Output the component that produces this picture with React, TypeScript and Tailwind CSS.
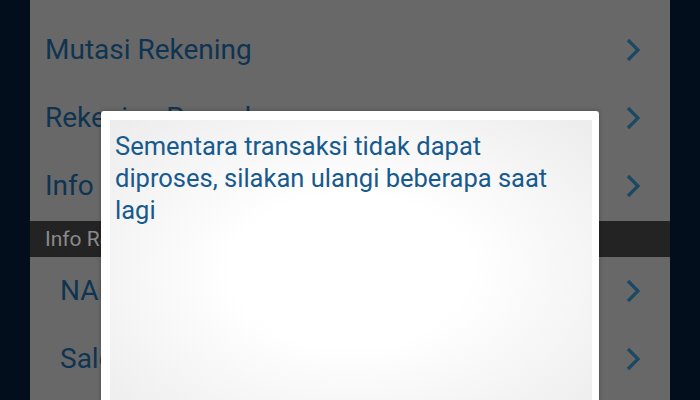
const ROWS_TOP = ['Mutasi Rekening', 'Rekening Ponsel', 'Info Kartu Kredit'];
const ROWS_BOTTOM = ['NAB Reksadana', 'Saldo Reksadana'];

function Chevron() {
  return (
    <svg width="18" height="26" viewBox="0 0 18 26" className="shrink-0">
      <path d="M4 3 L14 13 L4 23" fill="none" stroke="#1b4864" strokeWidth="3.2" strokeLinecap="butt" strokeLinejoin="miter" />
    </svg>
  );
}

function MenuRow({ label, indent }: { label: string; indent?: boolean }) {
  return (
    <div className={`flex h-[68px] items-center justify-between pr-[28px] ${indent ? 'pl-[30px]' : 'pl-[15px]'}`}>
      <span className="text-[28px] leading-none text-[#0f3452]">{label}</span>
      <Chevron />
    </div>
  );
}

export default function App() {
  return (
    <div
      className="relative flex h-[400px] w-[700px] overflow-hidden bg-[#020e1b]"
      style={{ fontFamily: 'Roboto, "Noto Sans", sans-serif' }}
    >
      <div className="w-[30px] shrink-0" />
      <div className="flex w-[640px] flex-col bg-[#686868] pt-[16px]">
        {ROWS_TOP.map((r) => (
          <MenuRow key={r} label={r} />
        ))}
        <div className="mt-[1px] flex h-[36px] items-center bg-[#232323] pl-[15px]">
          <span className="text-[21px] leading-none text-[#8a8a8a]">Info Reksadana</span>
        </div>
        {ROWS_BOTTOM.map((r) => (
          <MenuRow key={r} label={r} indent />
        ))}
      </div>

      <div className="absolute left-[101px] top-[111px] h-[320px] w-[498px] rounded-[3px] bg-white p-[9px] pr-[7px] shadow-[0_0_4px_rgba(0,0,0,0.3)]">
        <div className="h-full w-full bg-[radial-gradient(ellipse_at_center,#ffffff_35%,#ececec_100%)] pl-[5px] pt-[10px]">
          <p className="w-[460px] text-[25.5px] leading-[32px] text-[#175a8e]">
            Sementara transaksi tidak dapat diproses, silakan ulangi beberapa saat lagi
          </p>
        </div>
      </div>
    </div>
  );
}
